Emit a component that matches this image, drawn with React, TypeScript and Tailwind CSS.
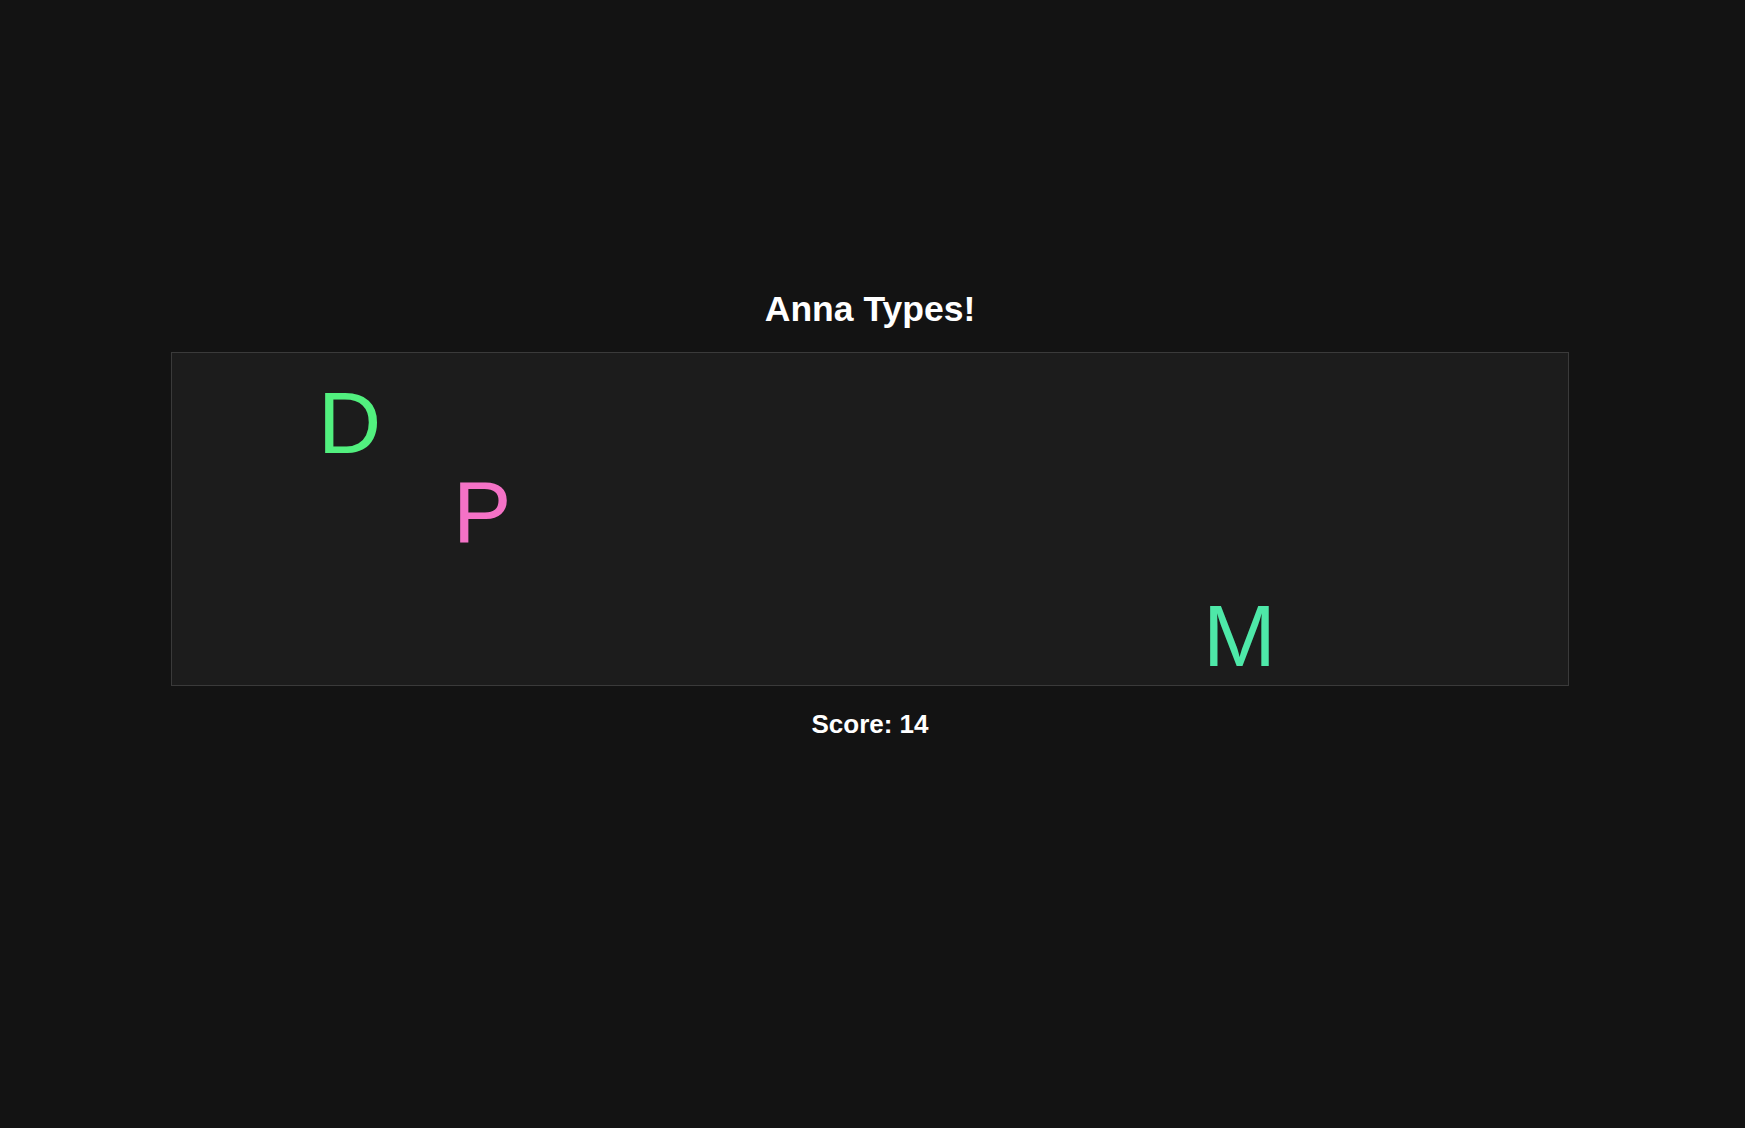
import React from 'react';

interface FallingLetter {
  char: string;
  left: number;
  top: number;
  color: string;
}

const letters: FallingLetter[] = [
  { char: 'D', left: 146, top: 27, color: 'text-[#52f07f]' },
  { char: 'P', left: 281, top: 116, color: 'text-[#f472c6]' },
  { char: 'M', left: 1031, top: 240, color: 'text-[#4ee8a8]' },
];

export default function App() {
  return (
    <div className="min-h-screen bg-[#131313] text-white font-['Liberation_Sans',Arial,sans-serif] pr-[5px]">
      <div className="flex flex-col items-center pt-[292px]">
        <h1 className="text-[35.5px] leading-none font-bold mb-[24.5px]">Anna Types!</h1>

        {/* play field */}
        <div className="relative w-[1398px] h-[334px] border border-[#3a3a3a] bg-[#1c1c1c] overflow-hidden">
          {letters.map((l) => (
            <span
              key={l.char}
              className={`absolute text-[87.5px] leading-none ${l.color}`}
              style={{ left: l.left, top: l.top }}
            >
              {l.char}
            </span>
          ))}
        </div>

        <p className="mt-[25px] text-[26px] leading-none font-bold">Score: 14</p>
      </div>
    </div>
  );
}
